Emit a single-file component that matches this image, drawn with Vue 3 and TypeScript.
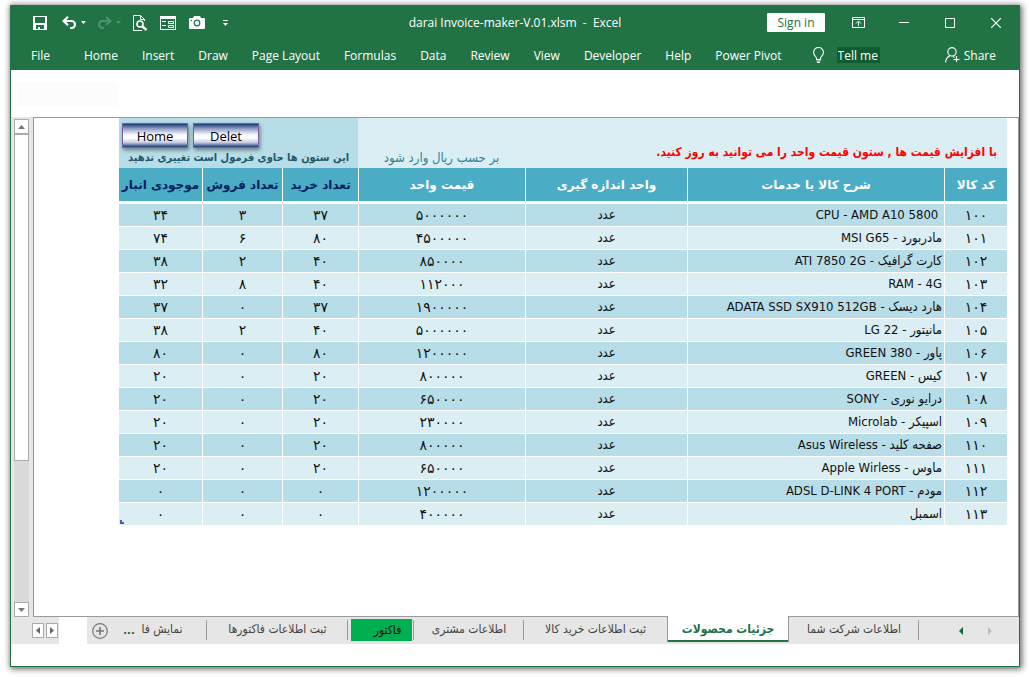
<script setup lang="ts">
import { ref } from 'vue'

interface Product {
  code: string
  name: string
  price: string
  bought: string
  sold: string
  stock: string
}

const menus: string[] = [
  'Home', 'Insert', 'Draw', 'Page Layout', 'Formulas', 'Data',
  'Review', 'View', 'Developer', 'Help', 'Power Pivot',
]

const search = ref('Tell me')

const products: Product[] = [
  { code: '۱۰۰', name: '\u00a0CPU - AMD A10 5800', price: '۵۰۰۰۰۰۰', bought: '۳۷', sold: '۳', stock: '۳۴' },
  { code: '۱۰۱', name: 'مادربورد - MSI G65', price: '۴۵۰۰۰۰۰', bought: '۸۰', sold: '۶', stock: '۷۴' },
  { code: '۱۰۲', name: 'کارت گرافیک - ATI 7850 2G', price: '۸۵۰۰۰۰', bought: '۴۰', sold: '۲', stock: '۳۸' },
  { code: '۱۰۳', name: 'RAM - 4G', price: '۱۱۲۰۰۰', bought: '۴۰', sold: '۸', stock: '۳۲' },
  { code: '۱۰۴', name: 'هارد دیسک - ADATA SSD SX910 512GB', price: '۱۹۰۰۰۰۰', bought: '۳۷', sold: '۰', stock: '۳۷' },
  { code: '۱۰۵', name: 'مانیتور - LG 22', price: '۵۰۰۰۰۰۰', bought: '۴۰', sold: '۲', stock: '۳۸' },
  { code: '۱۰۶', name: 'پاور - GREEN 380', price: '۱۲۰۰۰۰۰', bought: '۸۰', sold: '۰', stock: '۸۰' },
  { code: '۱۰۷', name: 'کیس - GREEN', price: '۸۰۰۰۰۰', bought: '۲۰', sold: '۰', stock: '۲۰' },
  { code: '۱۰۸', name: 'درایو نوری - SONY', price: '۶۵۰۰۰۰', bought: '۲۰', sold: '۰', stock: '۲۰' },
  { code: '۱۰۹', name: 'اسپیکر - Microlab', price: '۲۳۰۰۰۰', bought: '۲۰', sold: '۰', stock: '۲۰' },
  { code: '۱۱۰', name: 'صفحه کلید - Asus Wireless', price: '۸۰۰۰۰۰', bought: '۲۰', sold: '۰', stock: '۲۰' },
  { code: '۱۱۱', name: 'ماوس - Apple Wirless', price: '۶۵۰۰۰۰', bought: '۲۰', sold: '۰', stock: '۲۰' },
  { code: '۱۱۲', name: 'مودم - ADSL D-LINK 4 PORT', price: '۱۲۰۰۰۰۰', bought: '۰', sold: '۰', stock: '۰' },
  { code: '۱۱۳', name: 'اسمبل', price: '۴۰۰۰۰۰', bought: '۰', sold: '۰', stock: '۰' },
]
</script>

<template>
  <div class="page">
    <div class="window">
      <header class="top">
        <div class="titlebar">
          <div class="quick">
            <button class="ico save" aria-label="Save">
              <svg width="14" height="14" viewBox="0 0 14 14"><path fill="#fff" fill-rule="evenodd" d="M0 0h14v14H0zM2 1v6h10V1zM3 9v4h2v-2h2v2h4V9z" /></svg>
            </button>
            <button class="ico undo" aria-label="Undo">
              <svg width="15" height="13" viewBox="0 0 15 13"><path fill="none" stroke="#fff" stroke-width="2.200" d="M6 .8L1.600 5 6 9.200M2 5h7.500a3.500 3.500 0 0 1 0 7H8" /></svg>
            </button>
            <button class="caret" aria-label="Undo history">
              <svg width="5" height="3" viewBox="0 0 5 3"><path fill="#fff" d="M0 0h5L2.500 3z" /></svg>
            </button>
            <button class="ico redo" aria-label="Redo">
              <svg width="15" height="13" viewBox="0 0 15 13"><path fill="none" stroke="#4f9370" stroke-width="2" d="M9 1l4.500 4L9 9M13 5H5.500a3.500 3.500 0 0 0 0 7H7" /></svg>
            </button>
            <button class="caret" aria-label="Redo history">
              <svg width="5" height="3" viewBox="0 0 5 3"><path fill="#4f9370" d="M0 0h5L2.500 3z" /></svg>
            </button>
            <button class="ico preview" aria-label="Print preview">
              <svg width="15" height="16" viewBox="0 0 15 16"><path fill="none" stroke="#fff" d="M11.500 6V4.500l-4-4H.5v15H9M7.500.5v4h4" /><circle cx="7" cy="9" r="3" fill="none" stroke="#fff" stroke-width="1.600" /><path stroke="#fff" stroke-width="2.400" d="M9.500 11.500l4 3.500" /></svg>
            </button>
            <button class="ico form" aria-label="Form">
              <svg width="16" height="14" viewBox="0 0 16 14"><path fill="#fff" fill-rule="evenodd" d="M0 0h16v14H0zM1 3v10h14V3z" /><path stroke="#fff" d="M2 5.500h4M2 9.500h4" /><path fill="none" stroke="#fff" d="M8.500 5.500h5v2h-5zM8.500 9.500h5v2h-5z" /></svg>
            </button>
            <button class="ico camera" aria-label="Camera">
              <svg width="16" height="13" viewBox="0 0 16 13"><path fill="#fff" d="M1 2h3l1-2h6l1 2h3q1 0 1 1v9q0 1-1 1H1q-1 0-1-1V3q0-1 1-1z" /><circle cx="8" cy="7" r="2.800" fill="#fff" stroke="#217346" stroke-width="1.200" /><path fill="#217346" d="M1.500 4h1.500v1H1.500z" /></svg>
            </button>
            <button class="ico" aria-label="Customize Quick Access Toolbar">
              <svg width="5" height="6" viewBox="0 0 5 6"><path fill="#fff" d="M0 0h5v1H0zM0 3h5L2.500 6z" /></svg>
            </button>
          </div>
          <h1 class="title">darai Invoice-maker-V.01.xlsm&nbsp; -&nbsp; Excel</h1>
          <div class="controls">
            <button class="signin">Sign in</button>
            <button class="win" aria-label="Ribbon Display Options">
              <svg width="13" height="11" viewBox="0 0 13 11"><path fill="none" stroke="#fff" d="M.5.5h12v10H.5zM0 2.500h13M6.500 9V4.500M4 6.500L6.500 4 9 6.500" /></svg>
            </button>
            <button class="win" aria-label="Minimize">
              <svg width="10" height="10" viewBox="0 0 10 10"><path stroke="#fff" d="M0 4.500h10" /></svg>
            </button>
            <button class="win" aria-label="Maximize">
              <svg width="10" height="10" viewBox="0 0 10 10"><path fill="none" stroke="#fff" d="M.5.5h9v9h-9z" /></svg>
            </button>
            <button class="win" aria-label="Close">
              <svg width="10" height="10" viewBox="0 0 10 10"><path stroke="#fff" stroke-width="1.200" d="M0 0l10 10M10 0L0 10" /></svg>
            </button>
          </div>
        </div>
        <nav class="ribbon">
          <button class="menu file">File</button>
          <button v-for="m in menus" :key="m" class="menu">{{ m }}</button>
          <label class="tell">
            <svg width="11" height="16" viewBox="0 0 11 16"><path fill="none" stroke="#fff" stroke-width="1.100" d="M3.500 12.500V11C3 9.500.6 8.500.6 5.300a4.900 4.900 0 0 1 9.800 0C10.400 8.500 8 9.500 7.500 11v1.500zM3.500 14h4M4 15.500h3" /></svg>
            <input v-model="search" type="text" aria-label="Tell me what you want to do">
          </label>
          <button class="menu share">
            <svg width="15" height="16" viewBox="0 0 15 16"><circle cx="7" cy="4.800" r="4.200" fill="none" stroke="#fff" stroke-width="1.100" /><path fill="none" stroke="#fff" stroke-width="1.100" d="M.6 15.500c0-3.500 1.800-5.500 4.400-6.800M8 9.500l1.500 1M11.500 9v6M8.500 12.500h6" /></svg>
            <span>Share</span>
          </button>
        </nav>
      </header>

      <div class="strip"><div class="namebox"></div></div>

      <main class="work">
        <div class="scroll">
          <button class="sbtn" aria-label="Scroll up">
            <svg width="7" height="4" viewBox="0 0 7 4"><path fill="#777" d="M0 4h7L3.500 0z" /></svg>
          </button>
          <div class="thumb"></div>
          <div class="track"></div>
          <button class="sbtn" aria-label="Scroll down">
            <svg width="7" height="4" viewBox="0 0 7 4"><path fill="#777" d="M0 0h7L3.500 4z" /></svg>
          </button>
        </div>
        <div class="canvas">
          <table dir="rtl" lang="fa">
            <colgroup>
              <col class="c-code"><col><col class="c-unit"><col class="c-price">
              <col class="c-buy"><col class="c-sell"><col class="c-stock">
            </colgroup>
            <thead>
              <tr class="banner">
                <td colspan="3" class="warn">با افزایش قیمت ها , ستون قیمت واحد را می توانید به روز کنید.</td>
                <td class="unitnote">بر حسب ریال وارد شود</td>
                <td colspan="3" class="locked">
                  <div class="actions" dir="ltr">
                    <button class="glossy">Home</button>
                    <button class="glossy">Delet</button>
                  </div>
                  <p>این ستون ها حاوی فرمول است تغییری ندهید</p>
                </td>
              </tr>
              <tr class="heads">
                <th scope="col">کد کالا</th>
                <th scope="col">شرح کالا یا خدمات</th>
                <th scope="col">واحد اندازه گیری</th>
                <th scope="col">قیمت واحد</th>
                <th scope="col" class="navy">تعداد خرید</th>
                <th scope="col" class="navy">تعداد فروش</th>
                <th scope="col" class="navy">موجودی انبار</th>
              </tr>
            </thead>
            <tbody>
              <tr v-for="p in products" :key="p.code">
                <td class="num">{{ p.code }}</td>
                <td class="name">{{ p.name }}</td>
                <td>عدد</td>
                <td class="num">{{ p.price }}</td>
                <td class="num">{{ p.bought }}</td>
                <td class="num">{{ p.sold }}</td>
                <td class="num stock">{{ p.stock }}</td>
              </tr>
            </tbody>
          </table>
        </div>
      </main>

      <footer class="bottom">
        <div class="hscroll">
          <button class="hbtn" aria-label="Scroll left"><svg width="4" height="7" viewBox="0 0 4 7"><path fill="#666" d="M4 0v7L0 3.500z" /></svg></button>
          <button class="hbtn" aria-label="Scroll right"><svg width="4" height="7" viewBox="0 0 4 7"><path fill="#666" d="M0 0v7l4-3.500z" /></svg></button>
        </div>
        <div class="sheets">
          <button class="add" aria-label="New sheet">
            <svg width="16" height="16" viewBox="0 0 16 16"><circle cx="8" cy="8" r="7.300" fill="none" stroke="#777" stroke-width="1.200" /><path stroke="#777" stroke-width="1.600" d="M4 8h8M8 4v8" /></svg>
          </button>
          <button class="more" aria-label="More sheets">...</button>
          <button class="tab t-view">نمایش فا</button>
          <button class="tab t-list">ثبت اطلاعات فاکتورها</button>
          <button class="tab t-invoice"><span>فاکتور</span></button>
          <button class="tab t-customer">اطلاعات مشتری</button>
          <button class="tab t-buy">ثبت اطلاعات خرید کالا</button>
          <button class="tab t-products" aria-current="page">جزئیات محصولات</button>
          <button class="tab t-company">اطلاعات شرکت شما</button>
          <div class="sheetnav">
            <button aria-label="Previous sheet"><svg width="4" height="8" viewBox="0 0 4 8"><path fill="#0b6b38" d="M4 0v8L0 4z" /></svg></button>
            <button aria-label="Next sheet"><svg width="4" height="8" viewBox="0 0 4 8"><path fill="#bdbdbd" d="M0 0v8l4-4z" /></svg></button>
          </div>
        </div>
      </footer>
    </div>
  </div>
</template>

<style>
body {
  background: #fff;
}
</style>

<style scoped>
* {
  box-sizing: border-box;
}

button {
  border: 0;
  padding: 0;
  margin: 0;
  background: none;
  color: inherit;
  font: inherit;
}

svg {
  display: block;
  flex: none;
}

.page {
  display: flex;
  min-height: 100vh;
  padding: 5px 9px 10px 10px;
  font-family: "Open Sans", "Noto Sans", sans-serif;
  font-size: 12px;
}

.window {
  flex: 1;
  min-width: 0;
  display: flex;
  flex-direction: column;
  background: #fff;
  border: 1px solid #217346;
  border-top: 0;
  box-shadow: 1px 1px 6px 1px rgba(0, 0, 0, 0.6);
}

.top {
  background: #217346;
  color: #fff;
  height: 65px;
}

.titlebar {
  display: grid;
  grid-template-columns: 1fr auto 1fr;
  align-items: center;
  height: 35px;
}

.quick {
  display: flex;
  align-items: center;
  padding-left: 22px;
}

.save { margin-right: 15px; }
.undo { margin-right: 4px; }
.caret { margin-right: 11px; }
.redo { margin-right: 4px; }
.preview { margin: 0 12px 0 1px; }
.form { margin-right: 13px; }
.camera { margin-right: 18px; }

.title {
  margin: 0;
  font-size: 12px;
  font-weight: 400;
}

.controls {
  display: flex;
  align-items: center;
  justify-content: flex-end;
}

.signin {
  width: 58px;
  height: 19px;
  margin-right: 10px;
  background: #fff;
  color: #217346;
  border-radius: 1px;
  line-height: 19px;
}

.win {
  display: flex;
  align-items: center;
  justify-content: center;
  width: 46px;
  height: 32px;
}

.ribbon {
  display: flex;
  align-items: center;
  gap: 24px;
  height: 30px;
  padding: 0 23px 0 20px;
  white-space: nowrap;
}

.file {
  margin-right: 10px;
}

.tell {
  display: flex;
  align-items: center;
  gap: 13px;
  margin-left: 7px;
}

.tell input {
  width: 43px;
  height: 16px;
  padding: 0 1px;
  border: 0;
  outline: 0;
  background: #0e5c2f;
  color: #fff;
  font: inherit;
}

.share {
  display: flex;
  align-items: center;
  gap: 4px;
  margin-left: auto;
}

.strip {
  height: 47px;
  padding: 12px 6px;
}

.namebox {
  width: 100px;
  height: 24px;
  background: #fcfcfc;
}

.work {
  flex: 1;
  display: flex;
  background: #e6e6e6;
}

.scroll {
  display: flex;
  flex-direction: column;
  width: 22px;
  padding: 2px 4px 0 3px;
}

.sbtn {
  display: flex;
  align-items: center;
  justify-content: center;
  height: 15px;
  border: 1px solid #ababab;
  background: #fff;
}

.thumb {
  flex: 326;
  border: 1px solid #ababab;
  background: #fff;
}

.track {
  flex: 142;
  background: #dadada;
}

.canvas {
  flex: 1;
  min-width: 0;
  padding: 0 11px 90px 85px;
  border: 1px solid #999;
  background: #fff;
}

table {
  width: 100%;
  table-layout: fixed;
  border-collapse: separate;
  border-spacing: 0;
  font-family: "DejaVu Sans Condensed", "DejaVu Sans", sans-serif;
  font-size: 13px;
  color: #111;
}

.c-code { width: 63px; }
.c-unit { width: 162px; }
.c-price { width: 167px; }
.c-buy { width: 76px; }
.c-sell { width: 80px; }
.c-stock { width: 83px; }

td,
th {
  padding: 0;
  overflow: hidden;
  white-space: nowrap;
  text-align: center;
}

.banner td {
  height: 50px;
  background: #daeef3;
  vertical-align: bottom;
}

.banner .warn {
  padding: 0 10px 9px 0;
  color: #f00;
  font-size: 12px;
  font-weight: 700;
  text-align: right;
}

.banner .unitnote {
  padding-bottom: 3px;
  color: #31859b;
}

.banner .locked {
  padding: 5px 3px 0;
  background: #b7dde8;
  vertical-align: top;
}

.actions {
  display: flex;
  gap: 5px;
}

.glossy {
  width: 66px;
  height: 25px;
  border: 1px solid #7a5ea8;
  background: linear-gradient(#1f3a78, #8f9cc4 20%, #f4f5fa 45%, #fff 60%, #c8cee2 80%, #1f3a78);
  box-shadow: 1px 2px 4px rgba(0, 0, 0, 0.45);
  color: #000;
  font-family: "Open Sans", sans-serif;
  font-size: 13px;
  line-height: 22px;
}

.locked p {
  margin: 2px 0 0;
  color: #215967;
  font-size: 11px;
  font-weight: 700;
  line-height: 16px;
}

.heads th {
  height: 36px;
  background: #4bacc6;
  border-bottom: 3px solid #fff;
  border-left: 1px solid #fff;
  color: #fff;
  font-family: "DejaVu Sans", sans-serif;
  font-size: 12px;
  font-weight: 700;
}

.heads .navy {
  color: #002060;
}

.heads th:last-child,
tbody td:last-child {
  border-left: 0;
}

tbody td {
  height: 23px;
  border-left: 1px solid #fff;
  border-bottom: 1px solid #fff;
  background: #daeef3;
  line-height: 20px;
}

tbody .num {
  font-family: "DejaVu Sans", sans-serif;
  font-size: 14px;
}

tbody tr:nth-child(odd) td {
  background: #b7dde8;
}

tbody .name {
  padding-right: 2px;
  text-align: right;
}

tbody tr:last-child .stock {
  background:
    linear-gradient(#4a5fb0, #4a5fb0) 1px 17px / 2px 4px no-repeat,
    linear-gradient(#4a5fb0, #4a5fb0) 1px 19px / 4px 2px no-repeat,
    #daeef3;
}

.bottom {
  display: flex;
  height: 49px;
  padding-bottom: 22px;
}

.hscroll {
  display: flex;
  gap: 2px;
  width: 48px;
  padding: 6px 0 6px 21px;
  background: #e6e6e6;
}

.hbtn {
  display: flex;
  align-items: center;
  justify-content: center;
  width: 12px;
  height: 15px;
  border: 1px solid #ababab;
  background: #fff;
}

.sheets {
  display: flex;
  flex: 1;
  margin-left: 28px;
  background: #e6e6e6;
  color: #444;
  font-family: "DejaVu Sans Condensed", "DejaVu Sans", sans-serif;
  font-size: 12px;
  white-space: nowrap;
}

.add {
  margin: 0 15px 0 5px;
}

.more {
  width: 12px;
  color: #0b6b38;
  font-size: 11px;
  font-weight: 700;
}

.tab {
  position: relative;
  height: 24px;
}

.tab::after {
  content: "";
  position: absolute;
  top: 3px;
  right: 0;
  width: 1px;
  height: 20px;
  background: #999;
}

.t-view { width: 72px; padding-right: 18px; }
.t-list { width: 141px; }
.t-invoice { width: 66px; padding: 2px 1px 0 3px; }
.t-customer { width: 110px; }
.t-buy { width: 143px; }
.t-company { width: 130px; }

.t-invoice span {
  display: block;
  width: 61px;
  height: 22px;
  padding-left: 12px;
  background: #00b050;
  color: #111;
  line-height: 22px;
}

.t-products {
  width: 122px;
  height: 26px;
  margin-top: -1px;
  border: solid #999;
  border-width: 0 1px;
  background: #fff;
  box-shadow: inset 0 -2px #217346;
  color: #217346;
  font-weight: 700;
}

.t-buy::after,
.t-products::after {
  display: none;
}

.sheetnav {
  display: flex;
  align-items: center;
  gap: 25px;
  margin-left: auto;
  padding-right: 27px;
}
</style>
